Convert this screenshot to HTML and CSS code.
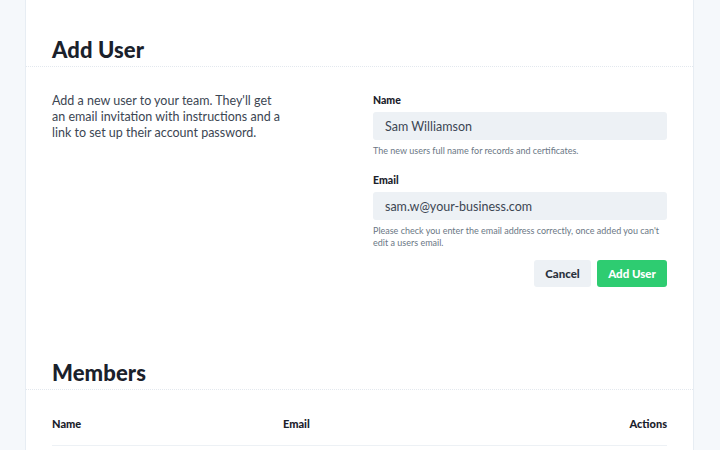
FILE: index.html
```html
<!DOCTYPE html>
<html lang="en">
<head>
<meta charset="utf-8">
<title>Add User</title>
<link rel="stylesheet" href="styles.css">
</head>
<body>
<div class="page">
  <main class="card">
    <section class="section">
      <header class="section-header">
        <h2 class="section-title">Add User</h2>
      </header>
      <div class="section-body">
        <p class="intro">Add a new user to your team. They'll get an email invitation with instructions and a link to set up their account password.</p>
        <form class="form">
          <div class="field">
            <label class="label" for="name">Name</label>
            <input class="input" id="name" type="text" value="Sam Williamson">
            <p class="help">The new users full name for records and certificates.</p>
          </div>
          <div class="field">
            <label class="label" for="email">Email</label>
            <input class="input" id="email" type="text" value="sam.w@your-business.com">
            <p class="help">Please check you enter the email address correctly, once added you can't edit a users email.</p>
          </div>
          <div class="actions">
            <button type="button" class="btn btn-secondary">Cancel</button>
            <button type="button" class="btn btn-primary">Add User</button>
          </div>
        </form>
      </div>
    </section>
    <section class="section section-members">
      <header class="section-header">
        <h2 class="section-title">Members</h2>
      </header>
      <div class="table-wrap">
        <table class="table">
          <thead>
            <tr>
              <th class="col-name">Name</th>
              <th class="col-email">Email</th>
              <th class="col-actions">Actions</th>
            </tr>
          </thead>
        </table>
      </div>
    </section>
  </main>
</div>
</body>
</html>
```
FILE: styles.css
```css
* { box-sizing: border-box; }
html, body {
  margin: 0;
  padding: 0;
  background: #f5f8fb;
  font-family: "Lato", "Open Sans", "Liberation Sans", sans-serif;
  color: #1c2530;
}
.page {
  padding: 0 26px 0 25px;
  height: 450px;
  overflow: hidden;
}
.card {
  background: #fff;
  border-left: 1px solid #e7edf3;
  border-right: 1px solid #e7edf3;
  min-height: 450px;
}
.section-header {
  padding: 37px 26px 3px;
  border-bottom: 1px dotted #e3e8ee;
}
.section-title {
  margin: 0;
  font-size: 22px;
  line-height: 26px;
  font-weight: 900;
  color: #1a212b;
  letter-spacing: 0.1px;
}
.section-body {
  display: grid;
  grid-template-columns: 1fr 294px;
  column-gap: 26px;
  padding: 26px 26px 26px;
}
.intro {
  margin: 0;
  max-width: 233px;
  font-size: 12.5px;
  line-height: 16px;
  color: #3c4653;
}
.form {
  display: flex;
  flex-direction: column;
}
.field {
  display: flex;
  flex-direction: column;
  margin-bottom: 11px;
}
.field + .field { margin-top: 5px; }
.label {
  font-size: 10.5px;
  line-height: 14px;
  font-weight: 900;
  color: #1a212b;
  margin-bottom: 5px;
}
.input {
  height: 28px;
  border: none;
  border-radius: 3px;
  background: #edf1f5;
  padding: 0 12px;
  font-family: inherit;
  font-size: 12.5px;
  color: #3c4653;
  outline: none;
}
.help {
  margin: 5px 0 0;
  font-size: 9px;
  line-height: 12px;
  color: #6b7785;
}
.actions {
  display: flex;
  justify-content: flex-end;
  gap: 6px;
}
.btn {
  height: 27px;
  border: none;
  border-radius: 3px;
  font-family: inherit;
  font-size: 11.5px;
  font-weight: 900;
  padding: 0;
  white-space: nowrap;
  cursor: pointer;
}
.btn-secondary {
  background: #edf1f5;
  color: #2a323d;
  width: 57px;
}
.btn-primary {
  background: #2ecc71;
  color: #fff;
  width: 70px;
}
.section-members .section-header {
  padding-top: 47px;
}
.table-wrap {
  padding: 12px 26px 0;
}
.table {
  width: 100%;
  border-collapse: collapse;
}
.table th {
  text-align: left;
  font-size: 11px;
  line-height: 14px;
  font-weight: 900;
  color: #1a212b;
  padding: 15px 0 14px;
  border-bottom: 1px solid #edf1f5;
}
.table .col-name { width: 231px; }
.table .col-actions { text-align: right; }
```
